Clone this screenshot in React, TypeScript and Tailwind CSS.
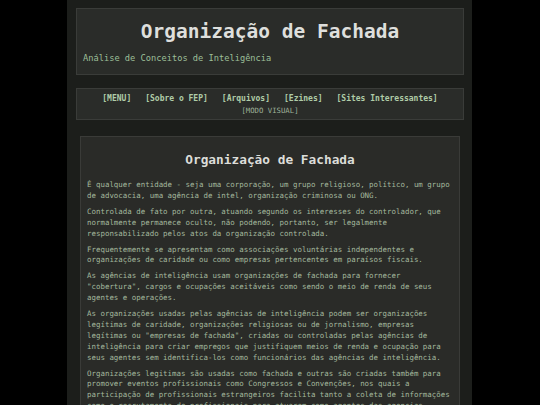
import React from 'react';

const mono = { fontFamily: '"DejaVu Sans Mono", "Liberation Mono", monospace' };

const links = ['[MENU]', '[Sobre o FEP]', '[Arquivos]', '[Ezines]', '[Sites Interessantes]'];

const paragraphs = [
  'É qualquer entidade - seja uma corporação, um grupo religioso, político, um grupo de advocacia, uma agência de intel, organização criminosa ou ONG.',
  'Controlada de fato por outra, atuando segundo os interesses do controlador, que normalmente permanece oculto, não podendo, portanto, ser legalmente responsabilizado pelos atos da organização controlada.',
  'Frequentemente se apresentam como associações voluntárias independentes e organizações de caridade ou como empresas pertencentes em paraísos fiscais.',
  'As agências de inteligência usam organizações de fachada para fornecer "cobertura", cargos e ocupações aceitáveis como sendo o meio de renda de seus agentes e operações.',
  'As organizações usadas pelas agências de inteligência podem ser organizações legítimas de caridade, organizações religiosas ou de jornalismo, empresas legítimas ou "empresas de fachada", criadas ou controladas pelas agências de inteligência para criar empregos que justifiquem meios de renda e ocupação para seus agentes sem identifica-los como funcionários das agências de inteligência.',
  'Organizações legitimas são usadas como fachada e outras são criadas também para promover eventos profissionais como Congressos e Convenções, nos quais a participação de profissionais estrangeiros facilita tanto a coleta de informações como o recrutamento de profissionais para atuarem como agentes das agencias.',
];

export default function App() {
  return (
    <div className="min-h-screen bg-black flex justify-center" style={mono}>
      <div className="w-[405px] min-h-screen bg-[#1c1e1b] pt-[8px] pl-[9px] pr-[8px] overflow-hidden ml-[-1px]">
        <header className="h-[67px] bg-[#2a2c29] border border-[#3a3c39] px-[6px] pt-[10px]">
          <h1 className="text-center text-[19.5px] leading-[26px] font-bold text-[#dedfdc]">
            Organização de Fachada
          </h1>
          <p className="mt-[7px] text-[8.7px] leading-[12px] text-[#9cbf98]">
            Análise de Conceitos de Inteligência
          </p>
        </header>

        <nav className="mt-[13px] h-[32px] bg-[#2a2c29] border border-[#3a3c39] flex flex-col items-center pt-[4px]">
          <div className="flex gap-[14px] text-[8px] leading-[12px] font-bold text-[#b0cca8]">
            {links.map((l) => (
              <a key={l} href="#" className="whitespace-pre">
                {l}
              </a>
            ))}
          </div>
          <a href="#" className="text-[7.3px] leading-[11px] text-[#9fb29a]">
            [MODO VISUAL]
          </a>
        </nav>

        <main className="mt-[16px] mx-[4px] bg-[#2a2b28] border border-[#3a3b38] px-[6px] pt-[14px] pb-[10px]">
          <h2 className="text-center text-[12.8px] leading-[18px] font-bold text-[#dcddd9] mb-[11px]">
            Organização de Fachada
          </h2>
          {paragraphs.map((p, i) => (
            <p key={i} className="text-[7.45px] leading-[10.85px] text-[#a3b89d] mb-[5.2px]">
              {p}
            </p>
          ))}
        </main>
      </div>
    </div>
  );
}
